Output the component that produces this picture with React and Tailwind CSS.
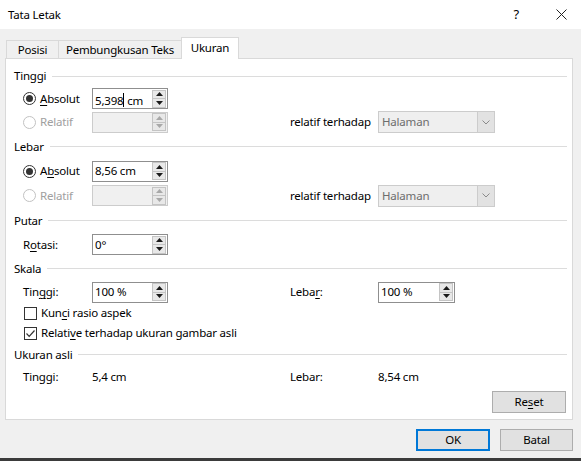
import React from 'react';

const Spin = ({ disabled }) => {
  const fill = disabled ? '#a8a8a8' : '#1a1a1a';
  return (
    <div className="ml-auto mr-[1px] flex h-[18px] w-[14px] flex-col border border-[#c4c4c4] bg-[#e8e8e8]">
      <div className="flex flex-1 items-center justify-center border-b border-[#c4c4c4]">
        <svg width="7" height="4" viewBox="0 0 7 4"><polygon points="0,4 7,4 3.5,0" fill={fill} /></svg>
      </div>
      <div className="flex flex-1 items-center justify-center">
        <svg width="7" height="4" viewBox="0 0 7 4"><polygon points="0,0 7,0 3.5,4" fill={fill} /></svg>
      </div>
    </div>
  );
};

const SpinInput = ({ value, disabled, cursor, wide }) => (
  <div
    className={`flex h-[21px] items-center border ${wide ? 'w-[77px]' : 'w-[76px]'} ${
      disabled ? 'border-[#cccccc] bg-[#f0f0f0]' : 'border-[#8f8f8f] bg-white'
    }`}
  >
    <span className="pl-[2px] text-black">
      {cursor ? (
        <>
          5,398<span className="inline-block h-[14px] w-px translate-y-[2px] bg-black" />
          {' '}cm
        </>
      ) : (
        value
      )}
    </span>
    <Spin disabled={disabled} />
  </div>
);

const Dropdown = () => (
  <div className="flex h-[22px] w-[117px] items-center border border-[#cccccc] bg-[#efefef]">
    <span className="pl-[3px] text-[#6d6d6d]">Halaman</span>
    <div className="ml-auto flex h-full w-[17px] items-center justify-center border-l border-[#cccccc] bg-[#e2e2e2]">
      <svg width="8" height="5" viewBox="0 0 8 5">
        <polyline points="0.5,0.5 4,4 7.5,0.5" fill="none" stroke="#8a8a8a" strokeWidth="1" />
      </svg>
    </div>
  </div>
);

const Radio = ({ checked, disabled }) => (
  <span
    className={`flex h-[13px] w-[13px] items-center justify-center rounded-full border bg-white ${
      disabled ? 'border-[#c2c2c2]' : 'border-[#333333]'
    }`}
  >
    {checked && <span className="h-[7px] w-[7px] rounded-full bg-[#333333]" />}
  </span>
);

const Check = ({ checked }) => (
  <span className="flex h-[13px] w-[13px] items-center justify-center border border-[#333333] bg-white">
    {checked && (
      <svg width="11" height="11" viewBox="0 0 11 11">
        <polyline points="1.5,5.5 4.2,8.3 9.5,2.5" fill="none" stroke="#333333" strokeWidth="1.2" />
      </svg>
    )}
  </span>
);

const Header = ({ children, h }) => (
  <div className={`flex items-center pl-[8px] pr-[5px] ${h}`}>
    <span>{children}</span>
    <div className="ml-[6px] h-px flex-1 bg-[#dcdcdc]" />
  </div>
);

const Row = ({ h, children }) => <div className={`flex items-center pl-[17px] ${h}`}>{children}</div>;

const U = ({ children }) => <span className="underline underline-offset-[2px]">{children}</span>;

export default function App() {
  return (
    <div className="flex h-[461px] w-[581px] flex-col bg-[#f0f0f0] font-['Noto_Sans',sans-serif] text-[11.5px] leading-none tracking-[-0.2px] text-black">
      {/* Title bar */}
      <div className="flex h-[29px] items-center bg-white pl-[8px]">
        <span>Tata Letak</span>
        <span className="ml-auto mr-[37px] text-[13px]">?</span>
        <svg className="mr-[14px]" width="11" height="11" viewBox="0 0 11 11">
          <path d="M0.5 0.5 L10.5 10.5 M10.5 0.5 L0.5 10.5" stroke="#222" strokeWidth="1" />
        </svg>
      </div>

      {/* Tabs */}
      <div className="mt-[8px] flex h-[21px] items-end pl-[6px]">
        <div className="flex h-[18px] w-[52px] items-center justify-center border-l border-t border-[#d9d9d9]">Posisi</div>
        <div className="flex h-[18px] w-[123px] items-center justify-center border-l border-t border-[#d9d9d9]">Pembungkusan Teks</div>
        <div className="relative z-10 -mb-px flex h-[22px] w-[58px] items-center justify-center border-x border-t border-[#d9d9d9] bg-white pb-[2px]">
          Ukuran
        </div>
      </div>

      {/* Panel */}
      <div className="ml-[5px] flex w-[568px] flex-col border border-[#d9d9d9] bg-white pt-[6px]">
        <Header h="h-[22px]">Tinggi</Header>
        <Row h="h-[23px]">
          <div className="flex w-[69px] items-center gap-[4px]"><Radio checked /><span><U>A</U>bsolut</span></div>
          <SpinInput cursor />
        </Row>
        <Row h="h-[24px]">
          <div className="flex w-[69px] items-center gap-[4px] text-[#a0a0a0]"><Radio disabled /><span>Relatif</span></div>
          <SpinInput disabled value="" />
          <div className="w-[122px]" />
          <div className="w-[88px]">relatif terhadap</div>
          <Dropdown />
        </Row>

        <Header h="h-[25px]">Lebar</Header>
        <Row h="h-[24px]">
          <div className="flex w-[69px] items-center gap-[4px]"><Radio checked /><span>A<U>b</U>solut</span></div>
          <SpinInput value="8,56 cm" />
        </Row>
        <Row h="h-[25px]">
          <div className="flex w-[69px] items-center gap-[4px] text-[#a0a0a0]"><Radio disabled /><span>Relatif</span></div>
          <SpinInput disabled value="" />
          <div className="w-[122px]" />
          <div className="w-[88px]">relatif terhadap</div>
          <Dropdown />
        </Row>

        <Header h="h-[25px]">Putar</Header>
        <Row h="h-[23px]">
          <div className="w-[69px]">R<U>o</U>tasi:</div>
          <SpinInput value="0°" />
        </Row>

        <Header h="h-[25px]">Skala</Header>
        <Row h="h-[22px]">
          <div className="w-[69px]">Tin<U>g</U>gi:</div>
          <SpinInput value="100 %" />
          <div className="w-[122px]" />
          <div className="w-[88px]">Leba<U>r</U>:</div>
          <SpinInput value="100 %" wide />
        </Row>
        <div className="flex h-[20px] items-center gap-[4px] pl-[18px]">
          <Check />
          <span>Kun<U>c</U>i rasio aspek</span>
        </div>
        <div className="flex h-[20px] items-center gap-[4px] pl-[18px]">
          <Check checked />
          <span>Relati<U>v</U>e terhadap ukuran gambar asli</span>
        </div>

        <Header h="h-[23px]">Ukuran asli</Header>
        <Row h="h-[21px]">
          <div className="w-[69px]">Tinggi:</div>
          <div className="w-[198px]">5,4 cm</div>
          <div className="w-[88px]">Lebar:</div>
          <div>8,54 cm</div>
        </Row>

        <div className="mb-[6px] mt-[4px] flex justify-end pr-[6px]">
          <button className="h-[22px] w-[74px] border border-[#adadad] bg-[#e1e1e1]">
            Re<U>s</U>et
          </button>
        </div>
      </div>

      {/* Footer buttons */}
      <div className="mt-[9px] flex justify-end gap-[10px] pr-[8px]">
        <button className="h-[22px] w-[74px] border-2 border-[#0078d7] bg-[#e1e1e1]">OK</button>
        <button className="h-[22px] w-[73px] border border-[#adadad] bg-[#e1e1e1]">Batal</button>
      </div>

      <div className="mt-auto h-[3px] bg-[#3b3b3b]" />
    </div>
  );
}
